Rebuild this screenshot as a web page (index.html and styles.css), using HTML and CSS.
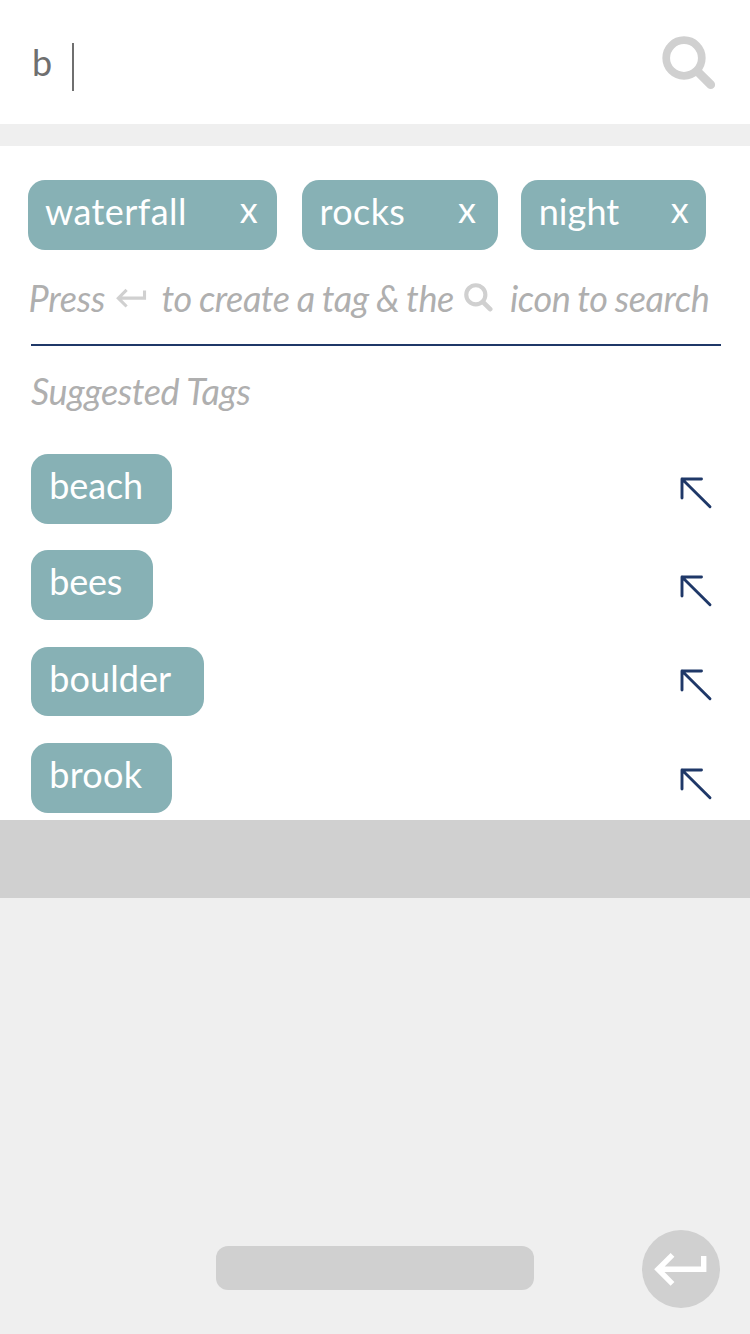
FILE: index.html
```html
<!DOCTYPE html>
<html lang="en">
<head>
<meta charset="utf-8">
<title>Tag search</title>
<link rel="stylesheet" href="styles.css">
</head>
<body>
<svg class="defs" width="0" height="0">
  <symbol id="search" viewBox="0 0 54 54"><circle cx="22" cy="22" r="17.8" fill="none" stroke="currentColor" stroke-width="7.7"/><path d="M36 36 48.7 48.7" fill="none" stroke="currentColor" stroke-width="8.8" stroke-linecap="round"/></symbol>
  <symbol id="enter" viewBox="0 0 54 34"><path d="M49.7 4V17.3H4M18.5 2.8 4 17.3 18.5 31.8" fill="none" stroke="currentColor" stroke-width="5.4"/></symbol>
  <symbol id="arrow" viewBox="0 0 34 34"><path d="M22.5 3H3V22M3 3 31 30.8" fill="none" stroke="currentColor" stroke-width="2.9" stroke-linecap="round" stroke-linejoin="round"/></symbol>
</svg>
<main class="screen">
  <header class="search-bar">
    <span class="query">b</span><span class="caret"></span>
    <svg class="search-icon"><use href="#search"/></svg>
  </header>
  <section class="panel">
    <div class="selected">
      <div class="tag tag-waterfall"><span>waterfall</span><span class="remove">x</span></div>
      <div class="tag tag-rocks"><span>rocks</span><span class="remove">x</span></div>
      <div class="tag tag-night"><span>night</span><span class="remove">x</span></div>
    </div>
    <div class="hint">
      <span class="hint-start">Press</span>
      <svg class="hint-enter"><use href="#enter"/></svg>
      <span class="hint-middle">to create a tag &amp; the</span>
      <svg class="hint-search"><use href="#search"/></svg>
      <span class="hint-end">icon to search</span>
    </div>
    <h2 class="heading">Suggested Tags</h2>
    <ul class="suggestions">
      <li><span class="tag tag-beach">beach</span><svg class="arrow"><use href="#arrow"/></svg></li>
      <li><span class="tag tag-bees">bees</span><svg class="arrow arrow-bees"><use href="#arrow"/></svg></li>
      <li><span class="tag tag-boulder">boulder</span><svg class="arrow arrow-boulder"><use href="#arrow"/></svg></li>
      <li><span class="tag tag-brook">brook</span><svg class="arrow arrow-brook"><use href="#arrow"/></svg></li>
    </ul>
  </section>
  <section class="keyboard">
    <div class="key-strip"></div>
    <div class="key-row">
      <div class="space-key"></div>
      <div class="enter-key"><svg><use href="#enter"/></svg></div>
    </div>
  </section>
</main>
</body>
</html>
```

FILE: styles.css
```css
* { box-sizing: border-box; }
body { margin: 0; background: #efefef; font: 36px/44px Lato, sans-serif; }
.defs { position: absolute; }
svg { display: block; flex: none; }
span { white-space: nowrap; }
.screen { width: 750px; height: 1334px; display: flex; flex-direction: column; overflow: hidden; }

.search-bar { height: 124px; flex: none; display: flex; align-items: flex-start; padding: 36px 34px 0 32px; background: #fff; color: #6f6f6f; margin-bottom: 22px; }
.query { width: 40px; padding-top: 4px; }
.caret { width: 2px; height: 48px; margin-top: 7px; background: #6f6f6f; }
.search-icon { width: 54px; height: 54px; margin-left: auto; color: #d0d0d0; }

.panel { height: 674px; flex: none; background: #fff; padding: 34px 29px 0 28px; }
.tag { height: 69.6px; border-radius: 17px; background: #87b1b5; color: #fff; display: flex; align-items: flex-start; padding: 9px 18px 0; }
.selected { display: flex; }
.selected .tag { justify-content: space-between; }
.remove { margin-top: -2px; letter-spacing: 0; }
.tag-waterfall { width: 248.7px; margin-right: 25.3px; padding-left: 17px; padding-right: 19px; letter-spacing: .42px; }
.tag-rocks { width: 196.5px; margin-right: 22.7px; padding-left: 17.5px; padding-right: 22.5px; letter-spacing: .4px; }
.tag-night { width: 184.6px; padding-left: 17.5px; padding-right: 17px; letter-spacing: .1px; }

.hint { height: 96.4px; margin-left: 3px; border-bottom: 2px solid #1f3868; display: flex; align-items: flex-start; padding-top: 26px; margin-bottom: 23px; font-style: italic; color: #afafaf; letter-spacing: -.42px; word-spacing: -.8px; }
.hint-start { width: 87px; margin-left: -2.5px; letter-spacing: -.15px; }
.hint svg { color: #d0d0d0; }
.hint-enter { width: 31px; height: 20px; margin-top: 12.3px; margin-right: 15px; }
.hint-middle { width: 302.5px; }
.hint-search { width: 29px; height: 29px; margin-top: 7px; }
.hint-end { margin-left: 17px; }

.heading { margin: 0 0 41px 3px; font: italic 36px/44px Lato, sans-serif; letter-spacing: -.38px; color: #afafaf; }
.suggestions { list-style: none; margin: 0; padding: 0 8px 0 3.2px; display: flex; flex-direction: column; gap: 26.8px; }
.suggestions li { display: flex; justify-content: space-between; height: 69.6px; }
.tag-beach, .tag-brook { width: 140.8px; }
.tag-beach { letter-spacing: -.1px; }
.tag-brook { letter-spacing: .3px; }
.tag-bees { width: 121.9px; letter-spacing: -.2px; }
.tag-boulder { width: 172.7px; letter-spacing: .1px; }
.arrow { width: 34px; height: 34px; margin-top: 22px; color: #1f3868; }
.arrow-bees { margin-top: 23.6px; }
.arrow-boulder { margin-top: 20.9px; }
.arrow-brook { margin-top: 24.1px; }

.keyboard { flex: 1; display: flex; flex-direction: column; justify-content: space-between; }
.key-strip { height: 78px; background: #d0d0d0; }
.key-row { display: flex; align-items: center; justify-content: space-between; padding: 0 30px 26px 216px; }
.space-key { width: 318px; height: 44px; margin-top: -2px; border-radius: 12px; background: #d0d0d0; }
.enter-key { width: 78px; height: 78px; border-radius: 50%; background: #d0d0d0; color: #fff; padding: 22px 0 0 12px; }
.enter-key svg { width: 54px; height: 34px; }
```
